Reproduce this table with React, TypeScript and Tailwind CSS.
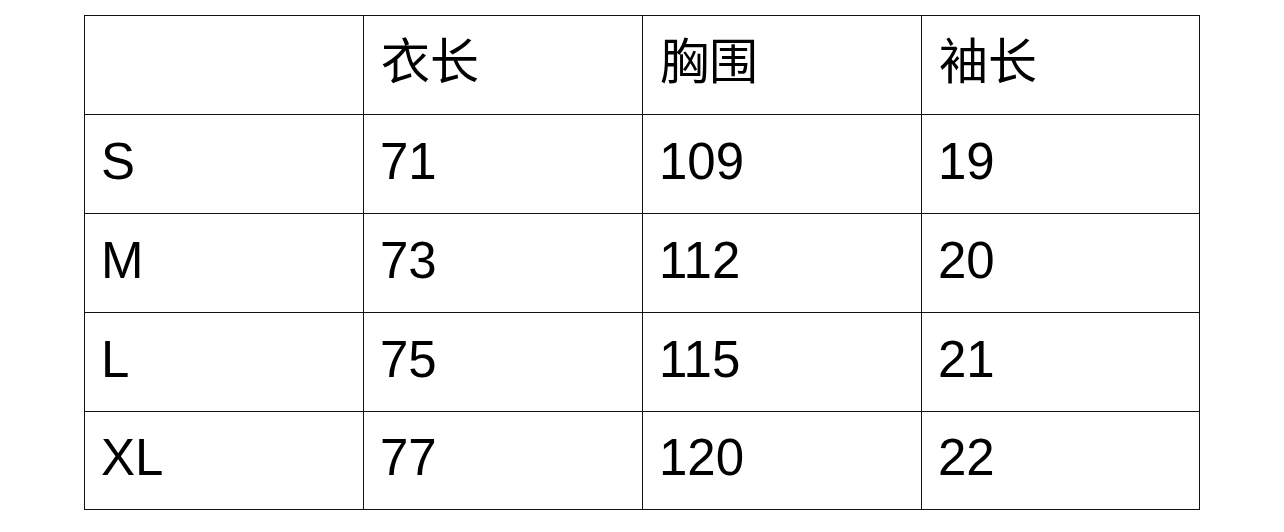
import React from 'react';

const header = ['', '衣长', '胸围', '袖长'];
const rows: string[][] = [
  ['S', '71', '109', '19'],
  ['M', '73', '112', '20'],
  ['L', '75', '115', '21'],
  ['XL', '77', '120', '22'],
];

const font = { fontFamily: '"Liberation Sans", "Noto Sans CJK SC", sans-serif' };

export default function App() {
  return (
    <div className="w-[1284px] h-[532px] bg-white pt-[15px] pl-[84px]">
      <div className="grid grid-cols-[278px_278px_278px_277px] grid-rows-[98px_98px_98px_98px_97px] gap-px bg-[#111] p-px w-[1116px]">
        {header.map((cell, c) => (
          <div
            key={`h-${c}`}
            className="bg-white flex items-center pl-[17px] pb-[6px] text-[49px] leading-none text-black"
            style={font}
          >
            {cell}
          </div>
        ))}
        {rows.map((row, r) =>
          row.map((cell, c) => (
            <div
              key={`${r}-${c}`}
              className="bg-white flex items-center pl-[16px] pb-[6px] text-[51px] leading-none text-black"
              style={font}
            >
              {cell}
            </div>
          ))
        )}
      </div>
    </div>
  );
}
